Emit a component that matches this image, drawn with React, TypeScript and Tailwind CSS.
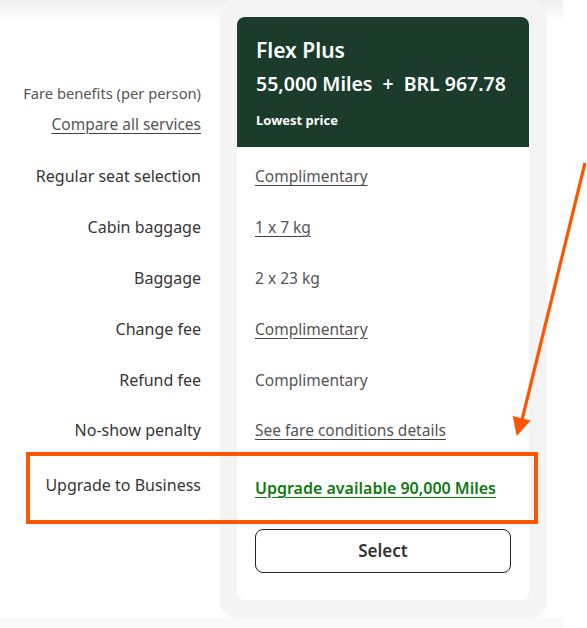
import React from 'react'

// 票价权益行
const rows: { label: string; value: string; link: boolean }[] = [
    { label: 'Regular seat selection', value: 'Complimentary', link: true },
    { label: 'Cabin baggage', value: '1 x 7 kg', link: true },
    { label: 'Baggage', value: '2 x 23 kg', link: false },
    { label: 'Change fee', value: 'Complimentary', link: true },
    { label: 'Refund fee', value: 'Complimentary', link: false },
    { label: 'No-show penalty', value: 'See fare conditions details', link: true },
]

const App: React.FC = () => {
    return (
        <div className="relative w-[587px] h-[628px] overflow-hidden bg-white font-['Noto_Sans',sans-serif]">
            <div className="flex w-[563px] h-[628px] bg-[linear-gradient(to_bottom,#f0f0f0_0px,#ffffff_22px,#ffffff_618px,#f9f9f9_618px)]">
                {/* 左侧标签列 */}
                <div className="w-[201px] flex flex-col items-end text-[16px] leading-[22px]">
                    <div className="h-[151px] flex flex-col items-end pt-[82px]">
                        <span className="text-[14.7px] text-[#555]">Fare benefits (per person)</span>
                        <span className="mt-[9px] text-[15.5px] text-[#555] underline underline-offset-[3px] decoration-[#444]">
                            Compare all services
                        </span>
                    </div>
                    {rows.map((row) => (
                        <div key={row.label} className="h-[50.8px] flex items-center text-[#363636]">
                            {row.label}
                        </div>
                    ))}
                    <div className="pt-[18px] text-[#363636]">Upgrade to Business</div>
                </div>

                {/* 票价卡片 */}
                <div className="ml-[19px] w-[327px] h-[618px] rounded-[16px] bg-[#f4f4f4] p-[17px]">
                    <div className="w-[292px] h-[583px] rounded-[8px] bg-white overflow-hidden">
                        <div className="h-[130px] bg-[#1b3b2b] px-[19px] pt-[18px] text-white">
                            <div className="text-[21px] leading-[30px] font-semibold">Flex Plus</div>
                            <div className="mt-[4px] flex text-[19.5px] leading-[30px] font-semibold">
                                <span>55,000 Miles</span>
                                <span className="mx-[10px]">+</span>
                                <span>BRL 967.78</span>
                            </div>
                            <div className="mt-[12px] text-[13px] leading-[18px] font-bold">Lowest price</div>
                        </div>
                        <div className="px-[18px] pt-[4px] text-[15.5px] leading-[22px]">
                            {rows.map((row) => (
                                <div key={row.label} className="h-[50.8px] flex items-center text-[#555]">
                                    <span className={row.link ? 'underline underline-offset-[3px] decoration-[#444]' : ''}>
                                        {row.value}
                                    </span>
                                </div>
                            ))}
                            <div className="h-[65px] flex items-center">
                                <span className="text-[16px] font-semibold text-[#107a10] underline underline-offset-[3px]">
                                    Upgrade available 90,000 Miles
                                </span>
                            </div>
                            <button className="mt-[8px] w-[256px] h-[44px] rounded-[8px] border border-[#222] bg-white text-[17px] font-semibold text-[#333]">
                                Select
                            </button>
                        </div>
                    </div>
                </div>
            </div>

            {/* 标注框 */}
            <div className="absolute left-[26px] top-[452px] w-[512px] h-[72px] border-[4px] border-[#ff5500]" />

            {/* 标注箭头 */}
            <svg className="absolute left-0 top-0" width="587" height="628" viewBox="0 0 587 628">
                <line x1="585" y1="163" x2="522" y2="420" stroke="#ff5500" strokeWidth="3.2" />
                <polygon points="516.7,436 512.7,416 530.7,420.5" fill="#ff5500" />
            </svg>
        </div>
    )
}

export default App
